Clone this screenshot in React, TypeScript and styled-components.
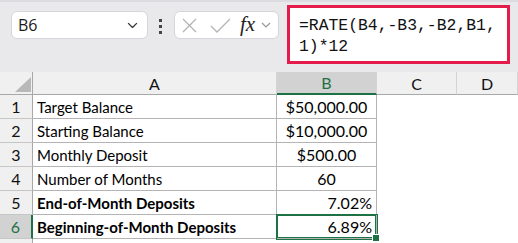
import React from 'react';
import styled, { createGlobalStyle } from 'styled-components';

const GlobalStyle = createGlobalStyle`
  html, body {
    margin: 0;
    padding: 0;
    background: #ffffff;
    overflow: hidden;
  }
`;

const Page = styled.div`
  width: 518px;
  height: 243px;
  overflow: hidden;
  font-family: Lato, "Open Sans", sans-serif;
  color: #000;
`;

const Toolbar = styled.div`
  height: 72px;
  box-sizing: border-box;
  background: #e9e9ec;
  border-top: 2px solid #dcdce0;
  display: flex;
  align-items: flex-start;
  padding-left: 11px;
`;

const NameBox = styled.div`
  margin-top: 9px;
  width: 137px;
  height: 28px;
  box-sizing: border-box;
  background: #fff;
  border: 1px solid #d6d6da;
  border-radius: 6px;
  display: flex;
  align-items: center;
  justify-content: space-between;
  padding: 0 9px 0 6px;
  font-family: "Open Sans", sans-serif;
  font-size: 16px;
  color: #1a1a1a;
`;

const Dots = styled.div`
  margin: 17px 12px 0 11px;
  display: flex;
  flex-direction: column;
  gap: 3px;
  span {
    width: 3px;
    height: 3px;
    background: #444;
  }
`;

const FxBox = styled.div`
  margin-top: 9px;
  width: 105px;
  height: 28px;
  box-sizing: border-box;
  background: #fff;
  border: 1px solid #d6d6da;
  border-radius: 6px;
  display: flex;
  align-items: center;
  padding: 0 4px 0 7px;
  flex-shrink: 0;
`;

const Fx = styled.span`
  font-family: "Liberation Serif", serif;
  font-style: italic;
  font-size: 21px;
  color: #222;
  margin: -2px 6px 0 9px;
`;

const FormulaBox = styled.div`
  margin: 3px 0 0 8px;
  width: 223px;
  height: 59px;
  box-sizing: border-box;
  background: #fff;
  border: 3px solid #e31c4b;
  padding: 7px 6px 0 9px;
  font-family: "Liberation Mono", monospace;
  font-size: 16.4px;
  line-height: 21px;
  color: #111;
  flex-shrink: 0;
`;

const Grid = styled.div`
  display: grid;
  grid-template-columns: 33px 244px 100px 80px 1fr;
  grid-auto-rows: 24px;
  grid-template-rows: 23px;
`;

const ColHead = styled.div<{ $active?: boolean; $corner?: boolean }>`
  box-sizing: border-box;
  background: ${p => (p.$active ? '#d2d2d2' : '#f0f0f0')};
  color: ${p => (p.$active ? '#1e7145' : '#111')};
  border-right: 1px solid ${p => (p.$corner ? '#a8a8a8' : '#d4d4d4')};
  border-bottom: ${p => (p.$active ? '2px solid #1e7145' : '1px solid #a8a8a8')};
  display: flex;
  align-items: center;
  justify-content: center;
  font-size: 16px;
`;

const Corner = styled.div`
  width: 0;
  height: 0;
  border-left: 16px solid transparent;
  border-bottom: 15px solid #b8b8b8;
  margin: 2px 0 0 13px;
`;

const RowHead = styled.div<{ $active?: boolean }>`
  box-sizing: border-box;
  background: ${p => (p.$active ? '#d2d2d2' : '#f0f0f0')};
  color: ${p => (p.$active ? '#1e7145' : '#111')};
  border-right: ${p => (p.$active ? '2px solid #1e7145' : '1px solid #a8a8a8')};
  border-bottom: 1px solid #c6c6c6;
  display: flex;
  align-items: center;
  justify-content: center;
  font-size: 16px;
`;

const Cell = styled.div<{ $align?: string; $bold?: boolean; $selected?: boolean; $size?: number }>`
  box-sizing: border-box;
  border-right: 1px solid #b4b4b4;
  border-bottom: 1px solid #b4b4b4;
  display: flex;
  align-items: center;
  justify-content: ${p => p.$align || 'flex-start'};
  padding: 0 4px;
  font-size: ${p => p.$size || 16}px;
  font-weight: ${p => (p.$bold ? 700 : 400)};
  white-space: nowrap;
  position: relative;
  ${p =>
    p.$selected &&
    `
    box-shadow: 0 0 0 1px #1e7145, inset 0 0 0 1px #1e7145;
    z-index: 1;
  `}
`;

const Handle = styled.span`
  position: absolute;
  right: -4px;
  bottom: -4px;
  width: 6px;
  height: 6px;
  background: #1e7145;
  border: 1px solid #fff;
`;

const Empty = styled.div`
  background: #fff;
`;

const rows = [
  { label: 'Target Balance', value: '$50,000.00', align: 'center' },
  { label: 'Starting Balance', value: '$10,000.00', align: 'center' },
  { label: 'Monthly Deposit', value: '$500.00', align: 'center' },
  { label: 'Number of Months', value: '60', align: 'center' },
  { label: 'End-of-Month Deposits', value: '7.02%', align: 'flex-end', bold: true },
  { label: 'Beginning-of-Month Deposits', value: '6.89%', align: 'flex-end', bold: true },
];

const Chevron = ({ size = 12, color = '#333' }: { size?: number; color?: string }) => (
  <svg width={size} height={size * 0.6} viewBox="0 0 10 6" style={{ flexShrink: 0 }}>
    <path d="M1 1l4 4 4-4" fill="none" stroke={color} strokeWidth="1.2" />
  </svg>
);

function App() {
  return (
    <Page>
      <GlobalStyle />
      <Toolbar>
        <NameBox>
          <span>B6</span>
          <Chevron size={11} />
        </NameBox>
        <Dots>
          <span />
          <span />
          <span />
        </Dots>
        <FxBox>
          <svg width="15" height="15" viewBox="0 0 15 15">
            <path d="M1 1l13 13M14 1L1 14" stroke="#b4b4b4" strokeWidth="1.3" fill="none" />
          </svg>
          <svg width="21" height="15" viewBox="0 0 21 15" style={{ marginLeft: 13 }}>
            <path d="M1 8l6 6L20 1" stroke="#b4b4b4" strokeWidth="1.3" fill="none" />
          </svg>
          <Fx>fx</Fx>
          <Chevron size={10} color="#999" />
        </FxBox>
        <FormulaBox>
          =RATE(B4,-B3,-B2,B1,
          <br />
          1)*12
        </FormulaBox>
      </Toolbar>
      <Grid>
        <ColHead $corner>
          <Corner />
        </ColHead>
        <ColHead>A</ColHead>
        <ColHead $active>B</ColHead>
        <ColHead>C</ColHead>
        <ColHead>D</ColHead>
        {rows.map((r, i) => (
          <React.Fragment key={r.label}>
            <RowHead $active={i === 5}>{i + 1}</RowHead>
            <Cell $bold={r.bold} $size={15}>
              {r.label}
            </Cell>
            <Cell $align={r.align} $selected={i === 5}>
              {r.value}
              {i === 5 && <Handle />}
            </Cell>
            <Empty />
            <Empty />
          </React.Fragment>
        ))}
        <RowHead />
        <Empty />
        <Empty />
        <Empty />
        <Empty />
      </Grid>
    </Page>
  );
}

export default App;
